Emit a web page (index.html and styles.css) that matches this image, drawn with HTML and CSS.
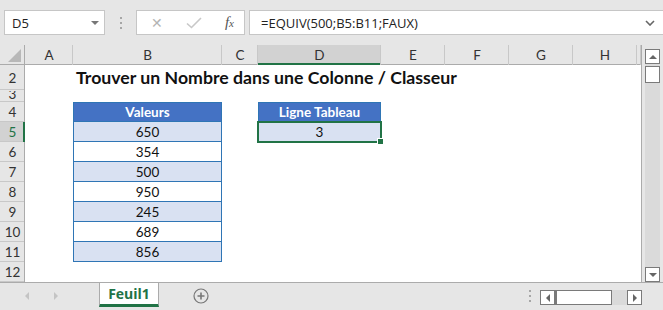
FILE: index.html
```html
<!DOCTYPE html>
<html lang="fr">
<head>
    <meta charset="UTF-8">
    <meta name="viewport" content="width=device-width, initial-scale=1.0">
    <title>Feuil1</title>
    <link rel="stylesheet" href="styles.css">
</head>
<body>
    <!-- formula bar -->
    <div class="fbar">
        <div class="namebox">
            <span>D5</span>
            <span class="caret"></span>
        </div>
        <div class="grip"><span></span><span></span><span></span></div>
        <div class="fx-btns">
            <span class="btn-x">&#x2715;</span>
            <svg class="btn-ok" width="16" height="12" viewBox="0 0 16 12"><path d="M1 6.5 L5.5 10.5 L15 1" fill="none" stroke="#c8c8c8" stroke-width="1.6"/></svg>
            <span class="btn-fx">f<small>x</small></span>
        </div>
        <div class="formula">
            <span>=EQUIV(500;B5:B11;FAUX)</span>
            <svg class="chev" width="10" height="6" viewBox="0 0 10 6"><path d="M1 1 L5 5 L9 1" fill="none" stroke="#666" stroke-width="1.6"/></svg>
        </div>
    </div>

    <div class="main">
        <table class="grid">
            <colgroup>
                <col style="width:25px"><col style="width:48px"><col style="width:149px"><col style="width:36px">
                <col style="width:123px"><col style="width:64px"><col style="width:64px"><col style="width:64px">
                <col style="width:64px"><col style="width:4px">
            </colgroup>
            <tr class="heads">
                <th class="corner"><span class="tri"></span></th>
                <th>A</th><th>B</th><th>C</th><th class="sel">D</th><th>E</th><th>F</th><th>G</th><th>H</th><th></th>
            </tr>
            <tr class="r-title">
                <th class="rh">2</th><td></td>
                <td class="title">Trouver un Nombre dans une Colonne / Classeur</td>
                <td></td><td></td><td></td><td></td><td></td><td></td><td></td>
            </tr>
            <tr class="r-thin">
                <th class="rh"><span class="cut">3</span></th><td></td><td></td><td></td><td></td><td></td><td></td><td></td><td></td><td></td>
            </tr>
            <tr>
                <th class="rh">4</th><td></td><td class="tb thead">Valeurs</td><td></td><td class="tb thead">Ligne Tableau</td><td></td><td></td><td></td><td></td><td></td>
            </tr>
            <tr>
                <th class="rh sel">5</th><td></td><td class="tb band">650</td><td></td><td class="tb band active">3</td><td></td><td></td><td></td><td></td><td></td>
            </tr>
            <tr>
                <th class="rh">6</th><td></td><td class="tb">354</td><td></td><td></td><td></td><td></td><td></td><td></td><td></td>
            </tr>
            <tr>
                <th class="rh">7</th><td></td><td class="tb band">500</td><td></td><td></td><td></td><td></td><td></td><td></td><td></td>
            </tr>
            <tr>
                <th class="rh">8</th><td></td><td class="tb">950</td><td></td><td></td><td></td><td></td><td></td><td></td><td></td>
            </tr>
            <tr>
                <th class="rh">9</th><td></td><td class="tb band">245</td><td></td><td></td><td></td><td></td><td></td><td></td><td></td>
            </tr>
            <tr>
                <th class="rh">10</th><td></td><td class="tb">689</td><td></td><td></td><td></td><td></td><td></td><td></td><td></td>
            </tr>
            <tr>
                <th class="rh">11</th><td></td><td class="tb band">856</td><td></td><td></td><td></td><td></td><td></td><td></td><td></td>
            </tr>
            <tr>
                <th class="rh">12</th><td></td><td></td><td></td><td></td><td></td><td></td><td></td><td></td><td></td>
            </tr>
        </table>

        <div class="vscroll">
            <div class="sbtn up"></div>
            <div class="vtrack">
                <div class="vthumb"></div>
            </div>
            <div class="sbtn down"></div>
        </div>
    </div>

    <!-- sheet tabs -->
    <div class="tabs">
        <div class="nav">
            <span class="arr left"></span>
            <span class="arr right"></span>
        </div>
        <div class="tab">Feuil1</div>
        <div class="add">
            <svg width="16" height="16" viewBox="0 0 16 16"><circle cx="8" cy="8" r="7" fill="none" stroke="#777" stroke-width="1.2"/><path d="M8 4.5 V11.5 M4.5 8 H11.5" stroke="#777" stroke-width="1.6"/></svg>
        </div>
        <div class="spacer"></div>
        <div class="grip small"><span></span><span></span><span></span></div>
        <div class="hscroll">
            <div class="hbtn"><span class="arr left dark"></span></div>
            <div class="hthumb"></div>
            <div class="htrack"></div>
            <div class="hbtn"><span class="arr right dark"></span></div>
        </div>
    </div>
</body>
</html>
```

FILE: styles.css
```css
body {
    margin: 0;
    width: 663px;
    height: 310px;
    overflow: hidden;
    background: #e6e6e6;
    font-family: 'Open Sans', sans-serif;
    color: #333;
}

/* formula bar */
.fbar {
    display: flex;
    align-items: flex-start;
    height: 45px;
    padding-top: 10px;
    box-sizing: border-box;
}

.namebox {
    margin-left: 4px;
    width: 101px;
    height: 25px;
    box-sizing: border-box;
    background: #fff;
    border: 1px solid #c6c6c6;
    display: flex;
    align-items: center;
    justify-content: space-between;
    padding: 0 5px 0 7px;
    font-size: 13px;
    color: #222;
}

.caret {
    width: 0;
    height: 0;
    border-left: 4px solid transparent;
    border-right: 4px solid transparent;
    border-top: 4px solid #777;
}

.grip {
    width: 31px;
    height: 25px;
    display: flex;
    flex-direction: column;
    align-items: center;
    justify-content: center;
    gap: 3px;
}

.grip span {
    width: 2px;
    height: 2px;
    background: #a6a6a6;
}

.fx-btns {
    width: 109px;
    height: 25px;
    box-sizing: border-box;
    background: #fff;
    border: 1px solid #c6c6c6;
    display: flex;
    align-items: center;
    padding: 0 10px 0 14px;
    justify-content: space-between;
}

.btn-x {
    color: #b4b4b4;
    font-size: 14px;
}

.btn-fx {
    font-family: 'Liberation Serif', serif;
    font-style: italic;
    font-size: 15px;
    color: #555;
}

.btn-fx small {
    font-size: 11px;
}

.formula {
    margin-left: 4px;
    flex: 1;
    height: 25px;
    box-sizing: border-box;
    background: #fff;
    border: 1px solid #c6c6c6;
    border-right: none;
    display: flex;
    align-items: center;
    justify-content: space-between;
    padding: 0 8px 0 11px;
    font-size: 13px;
    color: #222;
}

/* sheet */
.main {
    display: flex;
    height: 237px;
}

.grid {
    table-layout: fixed;
    width: 641px;
    border-spacing: 0;
    background: #fff;
    font-family: 'Lato', sans-serif;
    font-size: 13.5px;
    color: #111;
}

.grid td,
.grid th {
    padding: 0;
    height: 20px;
    text-align: center;
    white-space: nowrap;
}

.heads th {
    background: #e6e6e6;
    font-weight: normal;
    color: #333;
    box-shadow: inset -1px 0 #c8c8c8, inset 0 -1px #ababab;
}

.heads th.corner {
    position: relative;
    box-shadow: inset -1px 0 #ababab, inset 0 -1px #ababab;
}

.tri {
    position: absolute;
    right: 4px;
    bottom: 3px;
    width: 0;
    height: 0;
    border-left: 13px solid transparent;
    border-bottom: 13px solid #b8b8b8;
}

.heads th.sel {
    background: #d2d2d2;
    box-shadow: inset -1px 0 #c8c8c8, inset 0 -2px #217346;
}

.rh {
    background: #e6e6e6;
    font-weight: normal;
    color: #333;
    box-shadow: inset -1px 0 #ababab, inset 0 -1px #c8c8c8;
}

.rh.sel {
    background: #d2d2d2;
    color: #217346;
    box-shadow: inset -2px 0 #217346, inset 0 -1px #c8c8c8;
}

.r-title td,
.r-title th {
    height: 25px;
}

.r-thin td,
.r-thin th {
    height: 12px;
}

.cut {
    display: block;
    height: 11px;
    line-height: 7px;
    overflow: hidden;
}

.title {
    text-align: left !important;
    font-weight: bold;
    font-size: 17.7px;
    padding-left: 3px !important;
    overflow: visible;
}

/* data table */
.tb {
    box-shadow: inset 1px 0 #2f75b5, inset -1px 0 #2f75b5, inset 0 -1px #2f75b5;
}

.thead {
    background: #4472c4;
    color: #fff;
    font-weight: bold;
    box-shadow: inset 1px 0 #2f75b5, inset -1px 0 #2f75b5, inset 0 -1px #2f75b5, inset 0 1px #2f75b5;
}

.band {
    background: #d9e1f2;
}

.active {
    position: relative;
}

.active::after {
    content: "";
    position: absolute;
    left: -1px;
    top: -1px;
    right: -1px;
    bottom: -1px;
    border: 2px solid #217346;
}

.active::before {
    content: "";
    position: absolute;
    right: -3px;
    bottom: -3px;
    width: 5px;
    height: 5px;
    background: #217346;
    border: 1px solid #fff;
    z-index: 1;
}

/* vertical scroll bar */
.vscroll {
    width: 22px;
    border-left: 1px solid #ababab;
    box-sizing: border-box;
    padding: 4px 3px 0 3px;
    display: flex;
    flex-direction: column;
}

.sbtn {
    height: 15px;
    box-sizing: border-box;
    background: #fff;
    border: 1px solid #7a7a7a;
    display: flex;
    align-items: center;
    justify-content: center;
}

.sbtn::after {
    content: "";
    border-left: 4px solid transparent;
    border-right: 4px solid transparent;
}

.sbtn.up::after {
    border-bottom: 4px solid #666;
}

.sbtn.down::after {
    border-top: 4px solid #666;
}

.vtrack {
    flex: 1;
    background: #dadada;
    padding-top: 2px;
}

.vthumb {
    height: 17px;
    box-sizing: border-box;
    background: #fff;
    border: 1px solid #7a7a7a;
}

/* tabs */
.tabs {
    height: 28px;
    box-sizing: border-box;
    border-top: 1px solid #ababab;
    display: flex;
    align-items: flex-start;
}

.nav {
    width: 99px;
    height: 26px;
    display: flex;
    align-items: center;
    padding-left: 25px;
    box-sizing: border-box;
    gap: 25px;
}

.arr {
    width: 0;
    height: 0;
    border-top: 4px solid transparent;
    border-bottom: 4px solid transparent;
}

.arr.left {
    border-right: 4px solid #c4c4c4;
}

.arr.right {
    border-left: 4px solid #c4c4c4;
}

.arr.left.dark {
    border-right-color: #666;
}

.arr.right.dark {
    border-left-color: #666;
}

.tab {
    width: 60px;
    height: 24px;
    box-sizing: border-box;
    background: #fff;
    border-left: 1px solid #ababab;
    border-right: 1px solid #ababab;
    border-bottom: 3px solid #217346;
    color: #217346;
    font-weight: bold;
    font-size: 14px;
    text-align: center;
    line-height: 22px;
}

.add {
    width: 84px;
    height: 26px;
    display: flex;
    align-items: center;
    justify-content: center;
}

.spacer {
    flex: 1;
}

.grip.small {
    width: 14px;
    height: 26px;
    margin-right: 3px;
}

.hscroll {
    display: flex;
    height: 15px;
    margin-top: 7px;
    margin-right: 21px;
}

.hbtn {
    width: 15px;
    box-sizing: border-box;
    background: #fff;
    border: 1px solid #7a7a7a;
    display: flex;
    align-items: center;
    justify-content: center;
}

.hthumb {
    width: 57px;
    box-sizing: border-box;
    background: #fff;
    border: 1px solid #7a7a7a;
    border-left-width: 2px;
}

.htrack {
    width: 15px;
    background: #dadada;
}
```
